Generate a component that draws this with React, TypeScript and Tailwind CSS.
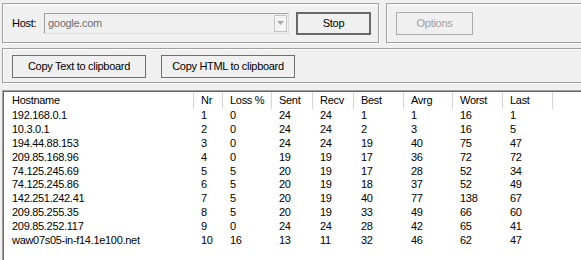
import React from "react";

const cols = [
  { name: "Hostname", w: "w-[190px]", pl: "pl-[8px]" },
  { name: "Nr", w: "w-[29px]", pl: "pl-[7px]" },
  { name: "Loss %", w: "w-[49px]", pl: "pl-[7px]" },
  { name: "Sent", w: "w-[41px]", pl: "pl-[7px]" },
  { name: "Recv", w: "w-[41px]", pl: "pl-[7px]" },
  { name: "Best", w: "w-[50px]", pl: "pl-[7px]" },
  { name: "Avrg", w: "w-[49px]", pl: "pl-[7px]" },
  { name: "Worst", w: "w-[50px]", pl: "pl-[7px]" },
  { name: "Last", w: "w-[50px]", pl: "pl-[7px]" },
];

const rows: (string | number)[][] = [
  ["192.168.0.1", 1, 0, 24, 24, 1, 1, 16, 1],
  ["10.3.0.1", 2, 0, 24, 24, 2, 3, 16, 5],
  ["194.44.88.153", 3, 0, 24, 24, 19, 40, 75, 47],
  ["209.85.168.96", 4, 0, 19, 19, 17, 36, 72, 72],
  ["74.125.245.69", 5, 5, 20, 19, 17, 28, 52, 34],
  ["74.125.245.86", 6, 5, 20, 19, 18, 37, 52, 49],
  ["142.251.242.41", 7, 5, 20, 19, 40, 77, 138, 67],
  ["209.85.255.35", 8, 5, 20, 19, 33, 49, 66, 60],
  ["209.85.252.117", 9, 0, 24, 24, 28, 42, 65, 41],
  ["waw07s05-in-f14.1e100.net", 10, 16, 13, 11, 32, 46, 62, 47],
];

const groupBox =
  "border border-[#a0a0a0] shadow-[inset_1px_1px_0_#ffffff,1px_1px_0_#ffffff]";

export default function App() {
  return (
    <div
      className="w-[581px] h-[260px] overflow-hidden bg-[#f0f0f0] text-[11px] tracking-[-0.3px] text-black"
      style={{ fontFamily: '"Liberation Sans", Arial, sans-serif' }}
    >
      <div className="w-[620px] pl-[2px] pt-[3px]">
        {/* Top row */}
        <div className="flex gap-[7px]">
          <div className={`${groupBox} w-[377px] h-[40px] flex items-center pl-[9px]`}>
            <span className="w-[32px] leading-[13px]">Host:</span>
            <div className="w-[245px] h-[21px] flex items-center border border-t-[#a0a0a0] border-l-[#a0a0a0] border-r-[#dcdcdc] border-b-[#dcdcdc] bg-[#f0f0f0]">
              <span className="flex-1 pl-[3px] text-[#6d6d6d] leading-[13px]">google.com</span>
              <div className="w-[13px] h-[17px] mr-[1px] border border-[#c4c4c4] bg-[#f4f4f4] flex items-center justify-center">
                <svg width="7" height="4" viewBox="0 0 7 4">
                  <path d="M0 0 H7 L3.5 4 Z" fill="#a8a8a8" />
                </svg>
              </div>
            </div>
            <button className="ml-[7px] w-[75px] h-[23px] border-2 border-[#686868] bg-[#f0f0f0] flex items-center justify-center leading-[13px]">
              Stop
            </button>
          </div>
          <div className={`${groupBox} flex-1 h-[40px] flex items-center pl-[9px]`}>
            <button className="w-[77px] h-[23px] border border-[#adadad] bg-[#f0f0f0] text-[#a0a0a0] flex items-center justify-center leading-[13px]">
              Options
            </button>
          </div>
        </div>

        {/* Copy buttons row */}
        <div className={`${groupBox} mt-[5px] h-[35px] flex items-start gap-[15px] pl-[9px] pt-[6px]`}>
          <button className="w-[134px] h-[23px] border border-[#707070] bg-[#f0f0f0] flex items-center justify-center leading-[13px]">
            Copy Text to clipboard
          </button>
          <button className="w-[134px] h-[23px] border border-[#707070] bg-[#f0f0f0] flex items-center justify-center leading-[13px]">
            Copy HTML to clipboard
          </button>
        </div>

        {/* List */}
        <div className="mt-[7px] h-[200px] border-l border-t border-[#a0a0a0] bg-white">
          <div className="h-full border-l border-t border-[#696969] bg-white">
            <div className="flex h-[17px]">
              {cols.map((c) => (
                <div
                  key={c.name}
                  className={`${c.w} ${c.pl} shrink-0 border-r border-[#d5d5d5] leading-[17px] whitespace-nowrap`}
                >
                  {c.name}
                </div>
              ))}
              <div className="flex-1" />
            </div>
            {rows.map((r, i) => (
              <div key={i} className="flex h-[13.9px] leading-[13.9px]">
                {r.map((v, j) => (
                  <div
                    key={j}
                    className={`${cols[j].w} ${cols[j].pl} shrink-0 whitespace-nowrap`}
                  >
                    {v}
                  </div>
                ))}
              </div>
            ))}
          </div>
        </div>
      </div>
    </div>
  );
}
